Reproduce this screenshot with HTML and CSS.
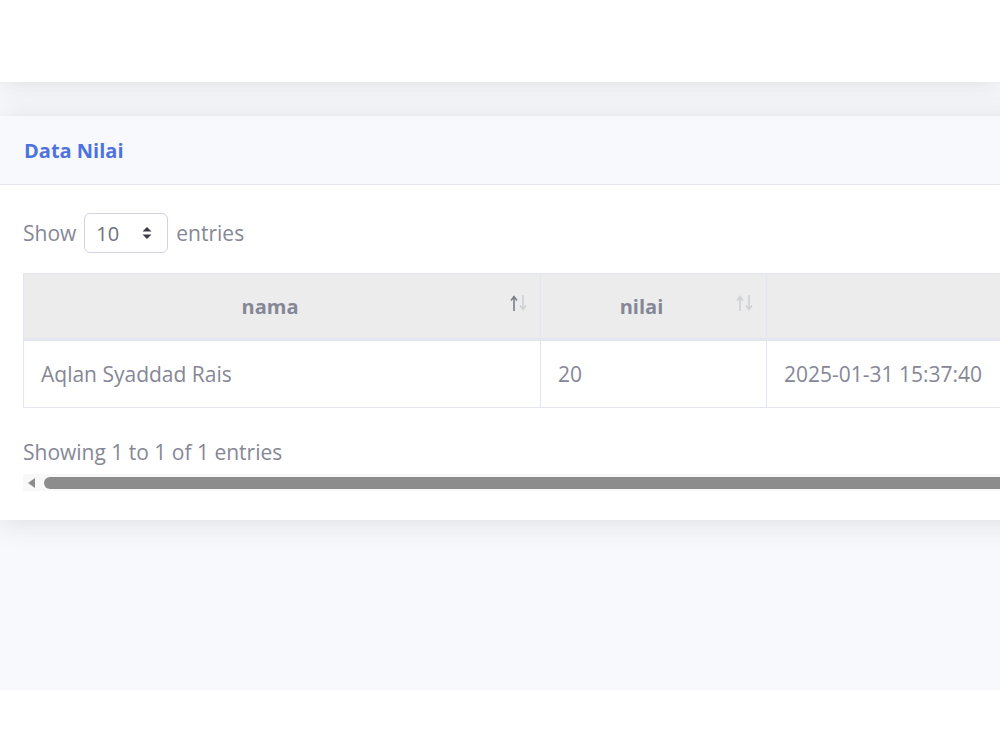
FILE: index.html
```html
<!DOCTYPE html>
<html lang="en">
<head>
    <meta charset="UTF-8">
    <meta name="viewport" content="width=device-width, initial-scale=1.0">
    <title>Data Nilai</title>
    <link rel="stylesheet" href="styles.css">
</head>
<body>
    <div class="topbar"></div>

    <div class="content">
        <div class="card">
            <div class="card-header">
                <h6>Data Nilai</h6>
            </div>
            <div class="card-body">
                <div class="length">
                    <span>Show</span>
                    <div class="select">
                        <span>10</span>
                        <svg class="caret" width="10" height="14" viewBox="0 0 10 14">
                            <path d="M5 1 L9.5 5.5 L0.5 5.5 Z" fill="#3a3b45"/>
                            <path d="M5 13 L9.5 8.5 L0.5 8.5 Z" fill="#3a3b45"/>
                        </svg>
                    </div>
                    <span>entries</span>
                </div>

                <table class="data-table">
                    <thead>
                        <tr>
                            <th class="col-nama">nama
                                <svg class="sort" width="18" height="18" viewBox="0 0 18 18">
                                    <path d="M4 17 V3 M1 6.5 L4 2.5 L7 6.5" stroke="#7d7f8f" stroke-width="1.6" fill="none"/>
                                    <path d="M13 1 V15 M10 11.5 L13 15.5 L16 11.5" stroke="#cfd0d6" stroke-width="1.6" fill="none"/>
                                </svg>
                            </th>
                            <th class="col-nilai">nilai
                                <svg class="sort" width="18" height="18" viewBox="0 0 18 18">
                                    <path d="M4 17 V3 M1 6.5 L4 2.5 L7 6.5" stroke="#cfd0d6" stroke-width="1.6" fill="none"/>
                                    <path d="M13 1 V15 M10 11.5 L13 15.5 L16 11.5" stroke="#cfd0d6" stroke-width="1.6" fill="none"/>
                                </svg>
                            </th>
                            <th class="col-time"></th>
                        </tr>
                    </thead>
                    <tbody>
                        <tr>
                            <td>Aqlan Syaddad Rais</td>
                            <td>20</td>
                            <td>2025-01-31 15:37:40</td>
                        </tr>
                    </tbody>
                </table>

                <div class="info">Showing 1 to 1 of 1 entries</div>

                <!-- horizontal scrollbar of the table wrapper -->
                <div class="scrollbar">
                    <span class="arrow"></span>
                    <div class="thumb"></div>
                </div>
            </div>
        </div>
    </div>
</body>
</html>
```

FILE: styles.css
```css
body {
    margin: 0;
    padding: 0;
    background-color: #fff;
    font-family: "Open Sans", "Noto Sans", sans-serif;
    color: #858796;
    overflow: hidden;
}

.topbar {
    height: 82px;
    background-color: #fff;
    position: relative;
    z-index: 2;
    box-shadow: 0 2px 28px rgba(58, 59, 69, 0.15);
}

.content {
    height: 608px;
    background-color: #f8f9fc;
    padding-top: 34px;
    box-sizing: border-box;
    overflow: hidden;
}

.card {
    width: 1200px;
    background-color: #fff;
    box-shadow: 0 2px 28px rgba(58, 59, 69, 0.15);
}

.card-header {
    height: 69px;
    box-sizing: border-box;
    padding: 0 24px;
    display: flex;
    align-items: center;
    background-color: #f8f9fc;
    border-bottom: 1px solid #e3e6f0;
}

.card-header h6 {
    margin: 0;
    font-size: 20px;
    font-weight: 700;
    color: #4e73df;
}

.card-body {
    padding: 27px 0 29px 23px;
}

.length {
    display: flex;
    align-items: center;
    gap: 8px;
    font-size: 21px;
    height: 42px;
}

.select {
    width: 84px;
    height: 40px;
    box-sizing: border-box;
    border: 1px solid #d1d3e2;
    border-radius: 6px;
    display: flex;
    align-items: center;
    justify-content: space-between;
    padding: 0 15px 0 11px;
    color: #6e707e;
    font-size: 20px;
}

.data-table {
    margin-top: 19px;
    border-collapse: collapse;
    table-layout: fixed;
    width: 1100px;
    font-size: 21px;
}

.data-table th {
    position: relative;
    height: 66px;
    padding: 0 24px 0 0;
    background-color: #ececec;
    border: 1px solid #e3e6f0;
    border-bottom: 3px solid #e3e6f0;
    font-weight: 700;
    font-size: 20px;
    color: #858796;
    text-align: center;
    box-sizing: border-box;
}

.col-nama { width: 517px; }
.col-nilai { width: 226px; }

.sort {
    position: absolute;
    right: 12px;
    top: 20px;
}

.data-table td {
    height: 66px;
    padding: 0 17px;
    border: 1px solid #e3e6f0;
    color: #858796;
}

.info {
    margin-top: 30px;
    font-size: 21px;
    line-height: 28px;
}

.scrollbar {
    margin-top: 8px;
    height: 17px;
    background-color: #f8f8f8;
    display: flex;
    align-items: center;
    padding-left: 5px;
    gap: 9px;
}

.arrow {
    width: 0;
    height: 0;
    border-top: 5px solid transparent;
    border-bottom: 5px solid transparent;
    border-right: 7px solid #8c8c8c;
}

.thumb {
    flex: 1;
    height: 12px;
    background-color: #8c8c8c;
    border-radius: 6px 0 0 6px;
}
```
